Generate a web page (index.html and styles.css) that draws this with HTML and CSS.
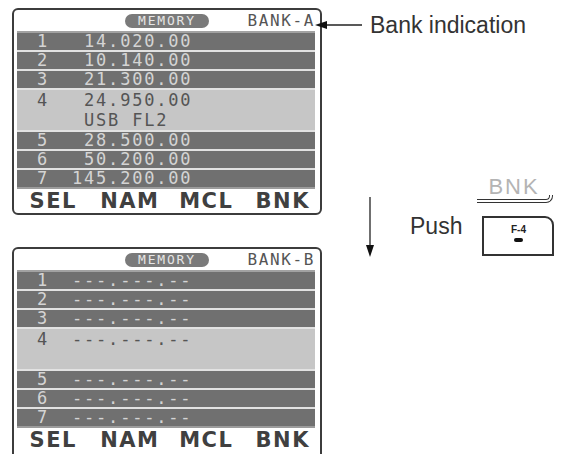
FILE: index.html
```html
<!DOCTYPE html>
<html lang="en">
<head>
    <meta charset="UTF-8">
    <meta name="viewport" content="width=device-width, initial-scale=1.0">
    <title>Memory Bank</title>
    <link rel="stylesheet" href="styles.css">
</head>
<body>
    <div class="page">
        <div class="screens">
            <div class="screen">
                <div class="screen-head">
                    <span class="pill">MEMORY</span>
                    <span class="bank">BANK-A</span>
                </div>
                <div class="rows">
                    <div class="row"><span class="num">1</span><span class="freq"> 14.020.00</span></div>
                    <div class="row"><span class="num">2</span><span class="freq"> 10.140.00</span></div>
                    <div class="row"><span class="num">3</span><span class="freq"> 21.300.00</span></div>
                    <div class="row row-sel">
                        <span class="num">4</span>
                        <div class="freq-block">
                            <div class="freq"> 24.950.00</div>
                            <div class="freq"> USB FL2</div>
                        </div>
                    </div>
                    <div class="row"><span class="num">5</span><span class="freq"> 28.500.00</span></div>
                    <div class="row"><span class="num">6</span><span class="freq"> 50.200.00</span></div>
                    <div class="row"><span class="num">7</span><span class="freq">145.200.00</span></div>
                </div>
                <div class="keys">
                    <span>SEL</span><span>NAM</span><span>MCL</span><span>BNK</span>
                </div>
            </div>

            <div class="screen screen-cut">
                <div class="screen-head">
                    <span class="pill">MEMORY</span>
                    <span class="bank">BANK-B</span>
                </div>
                <div class="rows">
                    <div class="row"><span class="num">1</span><span class="freq">---.---.--</span></div>
                    <div class="row"><span class="num">2</span><span class="freq">---.---.--</span></div>
                    <div class="row"><span class="num">3</span><span class="freq">---.---.--</span></div>
                    <div class="row row-sel"><span class="num">4</span><span class="freq">---.---.--</span></div>
                    <div class="row"><span class="num">5</span><span class="freq">---.---.--</span></div>
                    <div class="row"><span class="num">6</span><span class="freq">---.---.--</span></div>
                    <div class="row"><span class="num">7</span><span class="freq">---.---.--</span></div>
                </div>
                <div class="keys">
                    <span>SEL</span><span>NAM</span><span>MCL</span><span>BNK</span>
                </div>
            </div>
        </div>

        <div class="notes">
            <div class="callout">
                <svg class="callout-arrow" width="47" height="10" viewBox="0 0 47 10">
                    <line x1="8" y1="5" x2="47" y2="5" stroke="#222" stroke-width="1.4"/>
                    <polygon points="0,5 12,1 12,9" fill="#111"/>
                </svg>
                <span>Bank indication</span>
            </div>

            <div class="push">
                <svg class="down-arrow" width="10" height="61" viewBox="0 0 10 61">
                    <line x1="5" y1="0" x2="5" y2="50" stroke="#333" stroke-width="1.4"/>
                    <polygon points="1,48 9,48 5,60" fill="#111"/>
                </svg>
                <span class="push-label">Push</span>
                <div class="key">
                    <span class="key-label">BNK</span>
                    <div class="key-rule"></div>
                    <div class="key-box">
                        <span class="key-name">F-4</span>
                        <span class="key-bar"></span>
                    </div>
                </div>
            </div>
        </div>
    </div>
</body>
</html>
```

FILE: styles.css
```css
html, body {
    height: 100%;
    overflow: hidden;
}
body {
    margin: 0;
    background: #fff;
    font-family: "Liberation Sans", Arial, sans-serif;
    color: #333;
}
.page {
    display: flex;
    padding: 8px 0 0 12px;
}
.screens {
    display: flex;
    flex-direction: column;
    gap: 32px;
    width: 310px;
    flex-shrink: 0;
}
.screen {
    box-sizing: border-box;
    height: 207px;
    border: 2px solid #3c3c3c;
    border-radius: 6px;
    background: #fff;
    display: flex;
    flex-direction: column;
}
.screen-cut {
    height: 216px;
}
.screen-head {
    height: 21px;
    display: grid;
    grid-template-columns: 1fr auto 1fr;
    align-items: center;
}
.pill {
    grid-column: 2;
    width: 84px;
    height: 14px;
    border-radius: 7px;
    background: #7a7a7a;
    color: #e6e6e6;
    font-family: "DejaVu Sans Mono", monospace;
    font-size: 13px;
    line-height: 14px;
    letter-spacing: 1.8px;
    text-align: center;
}
.bank {
    grid-column: 3;
    justify-self: end;
    padding-right: 5px;
    font-family: "DejaVu Sans Mono", monospace;
    font-size: 16px;
    line-height: 16px;
    letter-spacing: 1.6px;
    color: #555;
}
.rows {
    margin: 0 5px 0 3px;
    display: flex;
    flex-direction: column;
    gap: 2px;
    background: #e2e2e2;
    border-top: 2px solid #a2a2a2;
    border-bottom: 2px solid #9c9c9c;
}
.row {
    height: 17px;
    display: flex;
    align-items: flex-end;
    background: #707070;
    color: #d4d4d4;
    font-family: "DejaVu Sans Mono", monospace;
    font-size: 17px;
    line-height: 17px;
    letter-spacing: 1.8px;
}
.row-sel {
    height: 40px;
    align-items: flex-start;
    background: #c6c6c6;
    color: #555;
}
.row-sel .num,
.row-sel .freq {
    line-height: 20px;
}
.num {
    width: 20px;
    padding-left: 20px;
    margin-right: 15px;
}
.freq {
    line-height: 17px;
    white-space: pre;
}
.keys {
    height: 24px;
    display: grid;
    grid-template-columns: repeat(4, 1fr);
    font-family: "DejaVu Sans", sans-serif;
    font-weight: bold;
    font-size: 21px;
    line-height: 25px;
    letter-spacing: 1.5px;
    text-align: center;
    color: #404040;
}
.keys span {
    padding-left: 2px;
}
.notes {
    display: flex;
    flex-direction: column;
    flex: 1;
}
.callout {
    margin: 4px 0 0 -7px;
    display: flex;
    align-items: center;
    gap: 8px;
    font-size: 23px;
    line-height: 26px;
    color: #333;
}
.push {
    margin-top: 139px;
    display: flex;
    align-items: flex-start;
}
.down-arrow {
    margin: 20px 0 0 43px;
}
.push-label {
    margin: 36px 0 0 35px;
    font-size: 23px;
    line-height: 26px;
    color: #333;
}
.key {
    margin-left: 15px;
    width: 80px;
    display: flex;
    flex-direction: column;
}
.key-label {
    padding-left: 11px;
    font-size: 22px;
    line-height: 20px;
    letter-spacing: 2px;
    color: #b4b4b4;
}
.key-rule {
    box-sizing: border-box;
    width: 76px;
    height: 8px;
    margin-top: -2px;
    border-style: double;
    border-color: #333;
    border-width: 0 4px 4px 0;
    border-bottom-right-radius: 7px;
}
.key-box {
    box-sizing: border-box;
    margin: 13px 0 0 5px;
    width: 72px;
    height: 40px;
    border: 2px solid #333;
    border-radius: 0 9px 0 0;
    display: flex;
    flex-direction: column;
    align-items: center;
}
.key-name {
    margin-top: 7px;
    font-size: 10px;
    line-height: 10px;
    font-weight: bold;
    color: #222;
}
.key-bar {
    margin-top: 3px;
    width: 9px;
    height: 4px;
    border-radius: 2px;
    background: #111;
}
```
